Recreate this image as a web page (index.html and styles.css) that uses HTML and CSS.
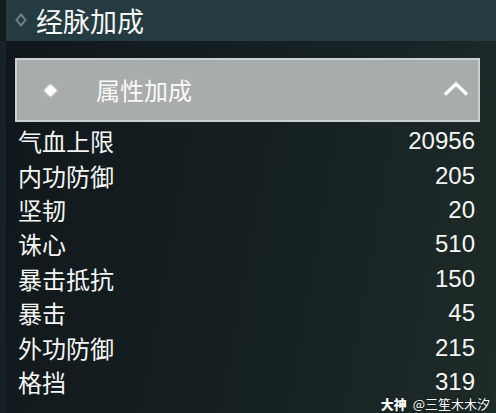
FILE: index.html
```html
<!DOCTYPE html>
<html lang="zh">
<head>
<meta charset="utf-8">
<link rel="stylesheet" href="styles.css">
</head>
<body>
<div class="page">
  <div class="side"></div>
  <div class="main">
    <header class="title">
      <svg class="title-icon" width="12" height="14" viewBox="0 0 12 14"><path d="M6 1.5 L10.5 7 L6 12.5 L1.5 7 Z" fill="none" stroke="#6e7e82" stroke-width="2"/></svg>
      <span class="title-text">经脉加成</span>
    </header>
    <section class="content">
      <div class="bar">
        <span class="bar-dot"></span>
        <span class="bar-text">属性加成</span>
        <svg class="chevron" width="26" height="16" viewBox="0 0 26 16"><path d="M2 13.5 L13 3 L24 13.5" fill="none" stroke="#fff" stroke-width="3.4" stroke-linejoin="miter"/></svg>
      </div>
      <ul class="rows">
        <li class="row"><span class="name">气血上限</span><span class="val">20956</span></li>
        <li class="row"><span class="name">内功防御</span><span class="val">205</span></li>
        <li class="row"><span class="name">坚韧</span><span class="val">20</span></li>
        <li class="row"><span class="name">诛心</span><span class="val">510</span></li>
        <li class="row"><span class="name">暴击抵抗</span><span class="val">150</span></li>
        <li class="row"><span class="name">暴击</span><span class="val">45</span></li>
        <li class="row"><span class="name">外功防御</span><span class="val">215</span></li>
        <li class="row"><span class="name">格挡</span><span class="val">319</span></li>
      </ul>
    </section>
  </div>
  <div class="watermark"><b>大神</b> @三笙木木汐</div>
</div>
</body>
</html>
```
FILE: styles.css
```css
* { box-sizing: border-box; }
html, body { margin: 0; padding: 0; }
body {
  width: 496px;
  height: 413px;
  overflow: hidden;
  background: #131b1e;
  font-family: "Noto Sans CJK SC", "Noto Sans", sans-serif;
  color: #f4f4f4;
}
.page {
  position: relative;
  display: flex;
  width: 496px;
  height: 413px;
  background: linear-gradient(100deg, #10171a 0%, #151f21 45%, #1d2b28 100%);
}
.side {
  width: 6px;
  flex: none;
  background: linear-gradient(180deg, #141b1f 0, #141b1f 41px, #17222a 41px, #152027 100%);
}
.main {
  flex: 1;
  display: flex;
  flex-direction: column;
}
.title {
  height: 41px;
  display: flex;
  align-items: center;
  padding-left: 9px;
  background: #243b41;
}
.title-icon { display: block; margin-right: 9px; margin-top: -2px; }
.title-text {
  font-size: 27px;
  line-height: 1;
  color: #f6f6f6;
  margin-top: -1px;
}
.content {
  padding: 17px 16px 0 9px;
}
.bar {
  height: 64px;
  display: flex;
  align-items: center;
  background: #a9acac;
  border: 2px solid #cdd0d0;
  padding-left: 29px;
  padding-right: 8px;
}
.bar-dot {
  width: 9px;
  height: 9px;
  background: #fff;
  transform: rotate(45deg);
  box-shadow: 0 0 3px rgba(255,255,255,0.8);
}
.bar-text {
  margin-left: 41px;
  font-size: 24px;
  line-height: 1;
  color: #fafafa;
  flex: 1;
}
.chevron { display: block; margin-right: 1px; margin-top: -2px; }
.rows {
  list-style: none;
  margin: 2px 0 0;
  padding: 0 5px 0 3px;
}
.row {
  height: 34.43px;
  display: flex;
  align-items: center;
  justify-content: space-between;
}
.name {
  font-size: 24px;
  line-height: 1;
  color: #f6f6f6;
}
.val {
  font-family: "Liberation Sans", Arial, sans-serif;
  font-size: 24px;
  line-height: 1;
  color: #f6f6f6;
}
.watermark {
  position: absolute;
  right: 6px;
  bottom: 3px;
  font-size: 13px;
  line-height: 13px;
  color: #fff;
  text-shadow: 0 0 2px rgba(0,0,0,0.6);
}
.watermark b { font-weight: 900; margin-right: 3px; }
```
